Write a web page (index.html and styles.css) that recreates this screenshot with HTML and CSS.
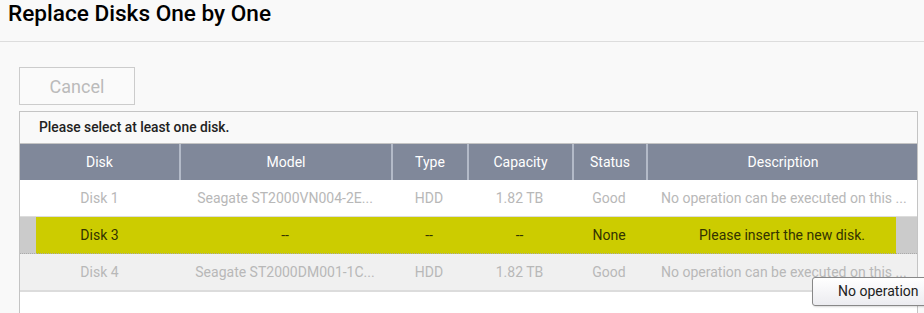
FILE: index.html
```html
<!DOCTYPE html>
<html lang="en">
<head>
    <meta charset="UTF-8">
    <title>Replace Disks One by One</title>
    <link rel="stylesheet" href="styles.css">
</head>
<body>
<header class="title">Replace Disks One by One</header>

<div class="content">
    <button class="cancel">Cancel</button>

    <div class="panel">
        <div class="hint">Please select at least one disk.</div>

        <div class="row head">
            <div>Disk</div>
            <div>Model</div>
            <div>Type</div>
            <div>Capacity</div>
            <div>Status</div>
            <div>Description</div>
        </div>

        <div class="row">
            <div>Disk 1</div>
            <div>Seagate ST2000VN004-2E...</div>
            <div>HDD</div>
            <div>1.82 TB</div>
            <div>Good</div>
            <div class="desc">No operation can be executed on this ...</div>
        </div>

        <div class="row selected">
            <div>Disk 3</div>
            <div>--</div>
            <div>--</div>
            <div>--</div>
            <div>None</div>
            <div>Please insert the new disk.</div>
        </div>

        <div class="row alt">
            <div>Disk 4</div>
            <div>Seagate ST2000DM001-1C...</div>
            <div>HDD</div>
            <div>1.82 TB</div>
            <div>Good</div>
            <div class="desc">No operation can be executed on this ...</div>
        </div>
    </div>
</div>

<div class="tooltip">No operation</div>
</body>
</html>
```

FILE: styles.css
```css
body {
    margin: 0;
    background-color: #f9f9f9;
    font-family: Roboto, 'Liberation Sans', sans-serif;
    overflow: hidden;
    position: relative;
    height: 313px;
}

.title {
    height: 42px;
    padding-left: 8px;
    font-size: 22.6px;
    font-weight: 500;
    line-height: 27px;
    color: #000000;
    border-bottom: 1px solid #dddddd;
    box-sizing: border-box;
}

.content {
    padding: 25px 6px 0 19px;
}

.cancel {
    display: block;
    width: 116px;
    height: 38px;
    padding: 0;
    border: 1px solid #cccccc;
    background-color: #fafafa;
    color: #bbbbbb;
    font-family: Roboto, 'Liberation Sans', sans-serif;
    font-size: 18px;
}

.panel {
    margin-top: 6px;
    border: 1px solid #c4c4c4;
    border-bottom: none;
    height: 220px;
    background-color: #ffffff;
}

.hint {
    height: 31px;
    line-height: 31px;
    padding-left: 19px;
    font-size: 13.8px;
    font-weight: 500;
    color: #222222;
    background-color: #f9f9f9;
    border-bottom: 1px solid #c4c4c4;
}

.row {
    display: grid;
    grid-template-columns: 159px 212px 76px 105px 74px 272px;
    height: 36px;
    line-height: 36px;
    font-size: 14px;
    color: #b8b8b8;
    text-align: center;
    background-color: #ffffff;
    border-bottom: 1px solid #dcdcdc;
}

.row > div {
    white-space: nowrap;
    overflow: hidden;
}

.row > .desc {
    text-align: left;
    padding-left: 15px;
}

.row.head {
    background-color: #80889a;
    color: #ffffff;
    border-bottom: none;
}

.row.head > div + div {
    border-left: 2px solid #b3bac8;
}

.row.selected {
    color: #333300;
    background: linear-gradient(to right, #cbcbcb 16px, #cccc00 16px, #cccc00 876px, #cbcbcb 876px);
    border-bottom: 1px dotted #aaaaaa;
}

.row.alt {
    background-color: #f0f0f0;
    border-bottom: 2px solid #dcdcdc;
}

/* tooltip for the truncated description, runs off the right edge */
.tooltip {
    position: absolute;
    left: 812px;
    top: 277px;
    width: 160px;
    height: 27px;
    line-height: 27px;
    padding-left: 25px;
    white-space: nowrap;
    font-size: 14px;
    color: #222222;
    background: linear-gradient(#ffffff, #ececf0);
    border: 1px solid #888888;
    border-radius: 3px;
    box-shadow: 1px 1px 2px rgba(0, 0, 0, 0.15);
}
```
